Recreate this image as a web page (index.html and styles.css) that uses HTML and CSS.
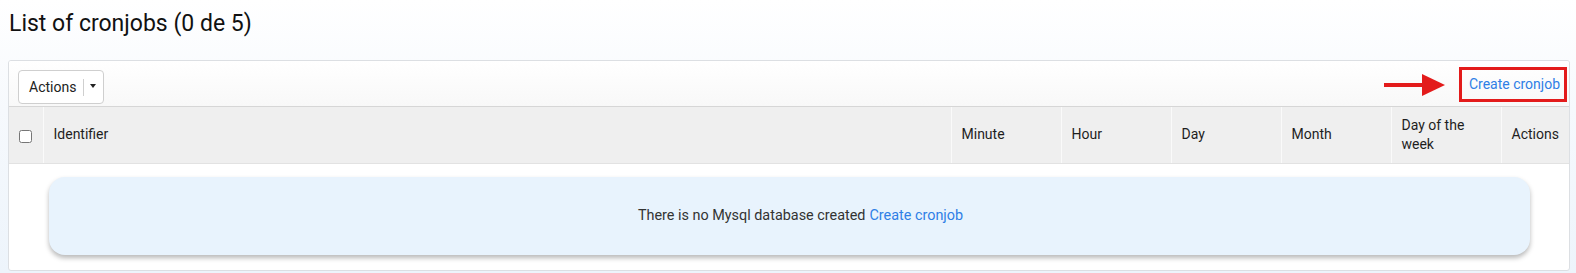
FILE: index.html
```html
<!DOCTYPE html>
<html lang="en">
<head>
<meta charset="utf-8">
<title>List of cronjobs</title>
<link rel="stylesheet" href="styles.css">
</head>
<body>
<h1 class="page-title">List of cronjobs (0 de 5)</h1>
<div class="panel">
  <div class="toolbar">
    <div class="btn-group">
      <span class="btn-label">Actions</span>
      <span class="btn-sep"></span>
      <span class="btn-caret"></span>
    </div>
    <div class="toolbar-right">
      <svg class="arrow" width="62" height="24" viewBox="0 0 62 24" aria-hidden="true">
        <line x1="0" y1="12" x2="42" y2="12" stroke="#e31b1b" stroke-width="4"/>
        <polygon points="38,1 61,12 38,23" fill="#e31b1b"/>
      </svg>
      <a class="create-link highlighted" href="#">Create cronjob</a>
    </div>
  </div>
  <table class="grid">
    <colgroup>
      <col class="c-check">
      <col class="c-id">
      <col class="c-std">
      <col class="c-std">
      <col class="c-std">
      <col class="c-std">
      <col class="c-std">
      <col class="c-act">
    </colgroup>
    <thead>
      <tr>
        <th class="th-check"><input type="checkbox" class="check"></th>
        <th>Identifier</th>
        <th>Minute</th>
        <th>Hour</th>
        <th>Day</th>
        <th>Month</th>
        <th>Day of the week</th>
        <th>Actions</th>
      </tr>
    </thead>
    <tbody>
      <tr>
        <td class="empty-cell" colspan="8">
          <div class="empty-box">There is no Mysql database created <a class="create-link" href="#">Create cronjob</a></div>
        </td>
      </tr>
    </tbody>
  </table>
</div>
</body>
</html>
```
FILE: styles.css
```css
html, body {
  margin: 0;
  padding: 0;
}
body {
  font-family: Roboto, "Liberation Sans", Arial, sans-serif;
  font-size: 14px;
  color: #222;
  background: linear-gradient(to bottom, #ffffff 0%, #f6f9fd 40%, #edf4fb 100%);
  min-height: 273px;
  padding: 0 6px 0 8px;
  box-sizing: border-box;
}
.page-title {
  margin: 0;
  padding: 10px 0 0 1px;
  font-size: 23px;
  line-height: 27px;
  font-weight: 400;
  color: #111;
  height: 60px;
  box-sizing: border-box;
}
.panel {
  border: 1px solid #dcdfe3;
  border-radius: 3px;
  background: #fff;
  overflow: hidden;
}
.toolbar {
  height: 46px;
  box-sizing: border-box;
  padding: 9px 2px 0 9px;
  display: flex;
  justify-content: space-between;
  align-items: flex-start;
  background: linear-gradient(to bottom, #ffffff, #f8f8f8);
  border-bottom: 1px solid #d6d6d6;
}
.btn-group {
  display: flex;
  align-items: center;
  height: 34px;
  box-sizing: border-box;
  border: 1px solid #cfcfcf;
  border-radius: 4px;
  background: #fff;
  padding: 0 7px 0 10px;
}
.btn-label {
  font-size: 14px;
  color: #222;
}
.btn-sep {
  width: 1px;
  height: 17px;
  background: #cfcfcf;
  margin: 0 6px 0 7px;
}
.btn-caret {
  width: 0;
  height: 0;
  border-left: 3.5px solid transparent;
  border-right: 3.5px solid transparent;
  border-top: 4px solid #222;
  margin-top: -2px;
}
.toolbar-right {
  display: flex;
  align-items: center;
  gap: 13px;
  margin-top: -3px;
}
.arrow {
  display: block;
}
.create-link {
  color: #2f7fe6;
  text-decoration: none;
}
.highlighted {
  display: block;
  border: 3px solid #e31b1b;
  padding: 6px 4px 7px 7px;
  line-height: 16px;
  font-size: 14px;
}
.grid {
  width: 100%;
  border-collapse: collapse;
  table-layout: fixed;
}
.c-check { width: 34px; }
.c-std { width: 110px; }
.c-act { width: 68px; }
.grid thead th {
  background: #efefef;
  height: 56px;
  box-sizing: border-box;
  padding: 8px 8px 8px 10px;
  text-align: left;
  font-weight: 400;
  font-size: 14px;
  line-height: 19px;
  color: #1e1e1e;
  vertical-align: middle;
  border-left: 1px solid #fafafa;
  border-bottom: 1px solid #e2e2e2;
}
.grid thead th:first-child {
  border-left: none;
}
.grid thead th.th-check {
  padding: 0;
  text-align: center;
}
.check {
  margin: 2px 0 0 0;
  width: 13px;
  height: 13px;
  vertical-align: middle;
}
.empty-cell {
  padding: 13px 39px 15px 40px;
}
.empty-box {
  height: 78px;
  box-sizing: border-box;
  border-radius: 16px;
  background: #e8f3fd;
  box-shadow: 0 3px 5px rgba(0, 0, 0, 0.28);
  display: flex;
  align-items: center;
  justify-content: center;
  gap: 4px;
  padding-left: 22px;
  font-size: 14.4px;
  color: #333;
}
```
